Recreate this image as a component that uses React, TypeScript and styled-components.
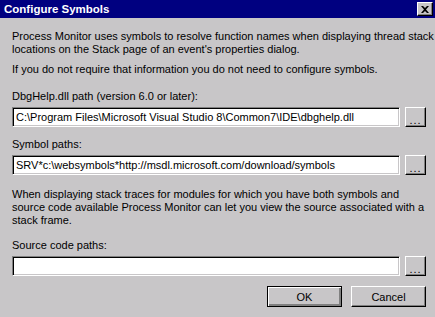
import styled, { createGlobalStyle } from "styled-components";

const GlobalStyle = createGlobalStyle`
  html, body {
    margin: 0;
    padding: 0;
    background: #c8c6c8;
  }
  body {
    font-family: Tahoma, "Liberation Sans", "DejaVu Sans", sans-serif;
    font-size: 11px;
    color: #000;
  }
`;

const Window = styled.div`
  width: 435px;
  height: 317px;
  background: #c8c6c8;
  display: flex;
  flex-direction: column;
  overflow: hidden;
`;

const TitleBar = styled.div`
  height: 18px;
  background: #000080;
  display: flex;
  align-items: center;
  justify-content: space-between;
  padding: 0 2px 0 4px;
`;

const Title = styled.span`
  color: #fff;
  font-weight: bold;
  font-size: 11.5px;
`;

const CloseButton = styled.button`
  width: 16px;
  height: 14px;
  padding: 0;
  background: #c8c6c8;
  border: 1px solid;
  border-color: #fff #000 #000 #fff;
  box-shadow: inset -1px -1px 0 #808080;
  display: flex;
  align-items: center;
  justify-content: center;
`;

const Body = styled.div`
  flex: 1;
  display: flex;
  flex-direction: column;
  padding: 12px 9px 0 12px;
`;

const Text = styled.p<{ $gap?: number; $top?: number }>`
  margin: ${(p) => p.$top ?? 0}px 0 ${(p) => p.$gap ?? 0}px;
  line-height: 13px;
  white-space: nowrap;
`;

const Label = styled.div`
  line-height: 13px;
  margin-bottom: 4px;
`;

const Row = styled.div<{ $gap?: number }>`
  display: flex;
  align-items: center;
  gap: 5px;
  margin-bottom: ${(p) => p.$gap ?? 0}px;
`;

const Field = styled.input`
  width: 389px;
  height: 20px;
  box-sizing: border-box;
  margin: 0;
  padding: 0 3px;
  font: inherit;
  color: #000;
  background: #fff;
  border: 1px solid;
  border-color: #808080 #fff #fff #808080;
  box-shadow: inset 1px 1px 0 #000, inset -1px -1px 0 #c8c6c8;
  outline: none;
`;

const Button = styled.button<{ $default?: boolean }>`
  box-sizing: border-box;
  margin: 0;
  padding: 0;
  font: inherit;
  color: #000;
  background: #c8c6c8;
  border: 1px solid;
  border-color: ${(p) => (p.$default ? "#000" : "#fff #000 #000 #fff")};
  box-shadow: ${(p) =>
    p.$default
      ? "inset 1px 1px 0 #fff, inset -2px -2px 0 #808080, inset -1px -1px 0 #000"
      : "inset -1px -1px 0 #808080"};
`;

const BrowseButton = styled(Button)`
  width: 21px;
  height: 20px;
  line-height: 18px;
  letter-spacing: 1px;
  padding-top: 3px;
`;

const Footer = styled.div`
  display: flex;
  justify-content: flex-end;
  gap: 9px;
  margin-top: 10px;
`;

const DialogButton = styled(Button)`
  width: 75px;
  height: 21px;
`;

const CloseGlyph = () => (
  <svg width="8" height="7" viewBox="0 0 8 7">
    <path d="M0 0h2l2 2 2-2h2L5 3.5 8 7H6L4 5 2 7H0l3-3.5z" fill="#000" />
  </svg>
);

const fields = [
  {
    label: "DbgHelp.dll path (version 6.0 or later):",
    value: "C:\\Program Files\\Microsoft Visual Studio 8\\Common7\\IDE\\dbghelp.dll",
  },
  {
    label: "Symbol paths:",
    value: "SRV*c:\\websymbols*http://msdl.microsoft.com/download/symbols",
  },
];

const App = () => {
  return (
    <>
      <GlobalStyle />
      <Window>
        <TitleBar>
          <Title>Configure Symbols</Title>
          <CloseButton>
            <CloseGlyph />
          </CloseButton>
        </TitleBar>
        <Body>
          <Text $gap={7}>
            Process Monitor uses symbols to resolve function names when displaying thread stack
            <br />
            locations on the Stack page of an event's properties dialog.
          </Text>
          <Text $gap={14}>
            If you do not require that information you do not need to configure symbols.
          </Text>
          {fields.map((f) => (
            <div key={f.label}>
              <Label>{f.label}</Label>
              <Row $gap={11}>
                <Field defaultValue={f.value} readOnly />
                <BrowseButton>...</BrowseButton>
              </Row>
            </div>
          ))}
          <Text $gap={12} $top={2}>
            When displaying stack traces for modules for which you have both symbols and
            <br />
            source code available Process Monitor can let you view the source associated with a
            <br />
            stack frame.
          </Text>
          <Label>Source code paths:</Label>
          <Row>
            <Field defaultValue="" />
            <BrowseButton>...</BrowseButton>
          </Row>
          <Footer>
            <DialogButton $default>OK</DialogButton>
            <DialogButton>Cancel</DialogButton>
          </Footer>
        </Body>
      </Window>
    </>
  );
};

export default App;
